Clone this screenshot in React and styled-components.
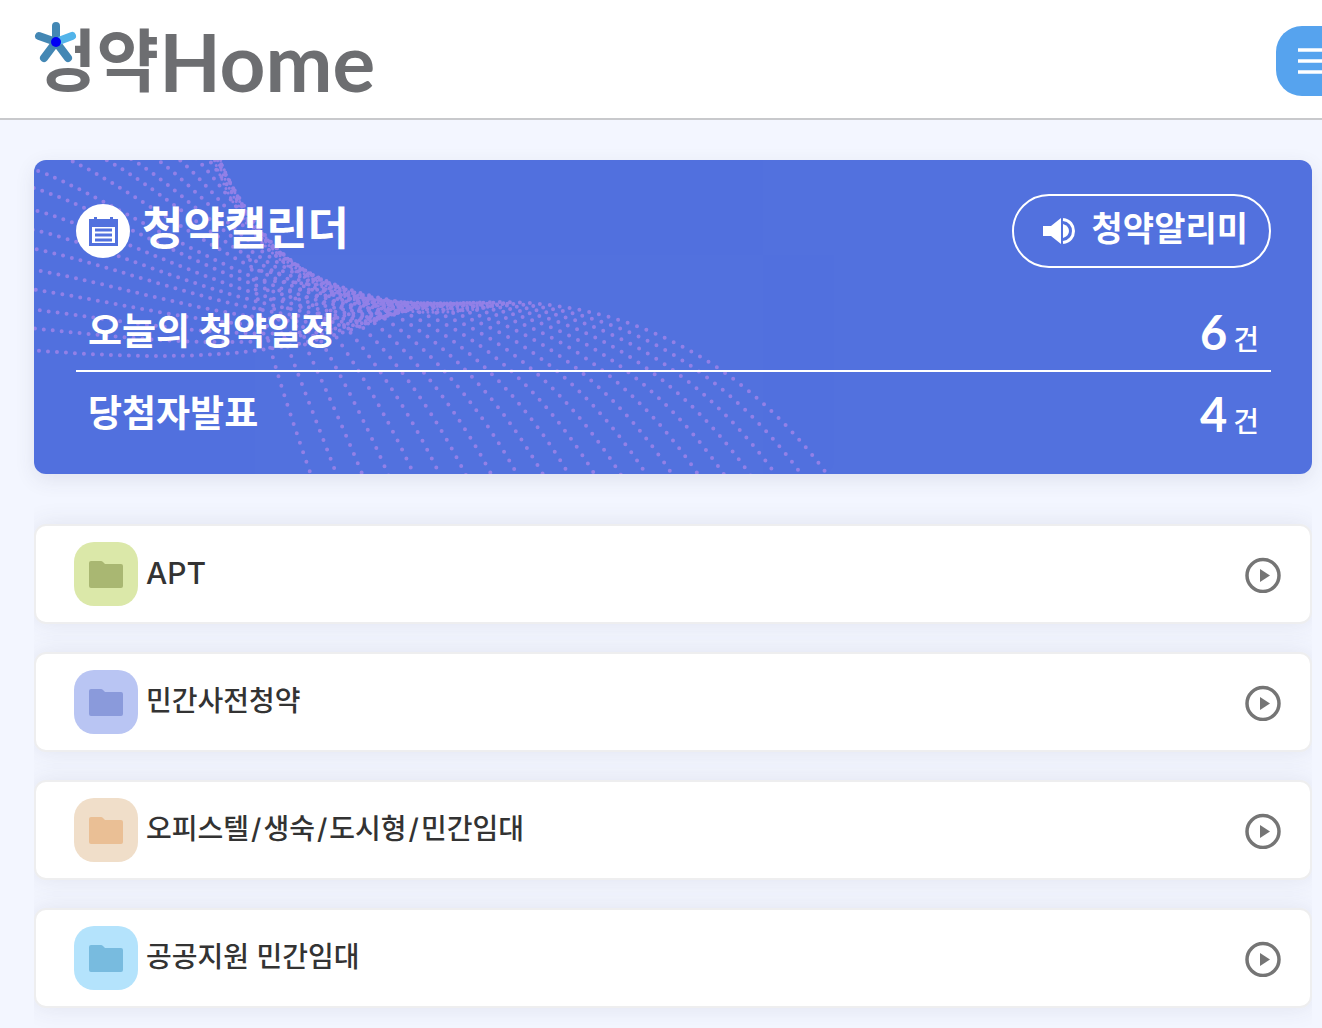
import React from "react";
import styled, { createGlobalStyle } from "styled-components";

const GlobalStyle = createGlobalStyle`
  *, *::before, *::after { box-sizing: border-box; }
  body {
    margin: 0;
    background: #f3f6ff;
    color: #333;
    font-family: Inter, "Noto Sans CJK KR", sans-serif;
    overflow-x: hidden;
  }
  a { color: inherit; text-decoration: none; }
  h1, h2, ul { margin: 0; padding: 0; }
  ul { list-style: none; }
`;

const Header = styled.header`
  display: flex;
  align-items: center;
  justify-content: space-between;
  height: 120px;
  padding: 4px 0 0 34px;
  background: #fff;
  border-bottom: 2px solid #c8c9cc;
  overflow: hidden;
`;

const Logo = styled.a`
  position: relative;
  display: flex;
  align-items: flex-start;
  color: #6d6e71;
  white-space: nowrap;
`;

const LogoKorean = styled.span`
  font: 700 68px/72px "Noto Sans CJK KR", sans-serif;
`;

const LogoLatin = styled.span`
  font: 700 80px/80px Lato, sans-serif;
`;

const LogoStar = styled.svg`
  position: absolute;
  left: 0;
  top: 0;
  width: 44px;
  height: 48px;
`;

const MenuButton = styled.button`
  display: flex;
  flex: none;
  align-items: center;
  justify-content: center;
  width: 70px;
  height: 70px;
  margin-right: -24px;
  padding: 0;
  border: 0;
  border-radius: 26px;
  background: #56a3ee;
`;

const Main = styled.main`
  padding: 40px 10px 0 34px;
`;

const Hero = styled.section`
  position: relative;
  padding: 34px 41px 22px 42px;
  border-radius: 12px;
  background: #5271de;
  box-shadow: 0 6px 20px rgba(60, 60, 90, 0.1);
  color: #fff;
`;

const Wave = styled.svg`
  position: absolute;
  left: 0;
  top: 0;
  width: 800px;
  height: 100%;
  border-radius: 12px;
`;

const HeroHead = styled.div`
  position: relative;
  display: flex;
  align-items: center;
  justify-content: space-between;
  margin-bottom: 22px;
`;

const HeroTitle = styled.h1`
  display: flex;
  align-items: center;
  gap: 12px;
  font-size: 45px;
  font-weight: 700;
  line-height: 54px;
`;

const TitleText = styled.span`
  padding-bottom: 4px;
`;

const AlertButton = styled.button`
  display: flex;
  align-items: center;
  gap: 16px;
  height: 74px;
  padding: 0 21px 0 28px;
  border: 2px solid #fff;
  border-radius: 37px;
  background: transparent;
  color: #fff;
  font: 700 34px/40px Inter, "Noto Sans CJK KR", sans-serif;
`;

const AlertText = styled.span`
  padding-bottom: 4px;
`;

const Schedule = styled.ul`
  position: relative;
`;

const ScheduleItem = styled.li`
  & + & { border-top: 2px solid #fff; }
`;

const ScheduleLink = styled.a`
  display: flex;
  align-items: center;
  justify-content: space-between;
  height: 80px;
  padding: 4px 12px 0;
  font-size: 37px;
  font-weight: 700;
  line-height: 44px;
`;

const Count = styled.span`
  display: flex;
  align-items: baseline;
  gap: 6px;
  padding-top: 8px;
  font-size: 28px;
  font-weight: 500;
`;

const CountNumber = styled.strong`
  font-family: Lato, sans-serif;
  font-size: 47px;
  font-weight: 700;
`;

const Menu = styled.nav`
  padding: 50px 0 28px;
  overflow: hidden;
`;

const MenuList = styled.ul`
  display: grid;
  gap: 28px;
`;

const MenuLink = styled.a`
  display: flex;
  align-items: center;
  gap: 8px;
  height: 100px;
  padding: 0 28px 0 38px;
  border: 2px solid #eeeeef;
  border-radius: 12px;
  background: #fff;
  box-shadow: 0 0 24px rgba(60, 60, 90, 0.1);
`;

const FolderTile = styled.span`
  display: flex;
  align-items: center;
  justify-content: center;
  width: 64px;
  height: 64px;
  border-radius: 20px;
  background: ${(p) => p.$tile};
  color: ${(p) => p.$ink};
`;

const MenuText = styled.span`
  flex: 1;
  padding-bottom: 2px;
  font-size: ${(p) => (p.$latin ? 30 : 28)}px;
  font-weight: 500;
  line-height: 40px;
`;

const Slash = styled.span`
  padding: 0 2px;
`;

const leftStarts = [
  [30, 350], [30, 328], [30, 309], [30, 289], [30, 269], [30, 248], [30, 229],
  [30, 209], [30, 187], [30, 168], [60, 156], [98, 156], [126, 156], [152, 156],
  [175, 156], [194, 156], [206, 156], [214, 156], [217, 156],
];

const mix = (a, b, u) => a + (b - a) * u;

const leftRows = leftStarts.map(([x, y], i) => {
  const u = i / (leftStarts.length - 1);
  const reach = mix(130, 40, u);
  const slope = 0.08 + 0.4 * u + 1.5 * u ** 5;
  return `M${x} ${y}C${x + reach} ${y + reach * slope} ${mix(290, 275, u)} ${mix(362, 285, u)} ${mix(390, 430, u)} ${mix(314, 307, u)}`;
});

const rightRows = Array.from({ length: 21 }, (_, i) => {
  const u = i / 20;
  const x = mix(250, 440, u);
  const y = 306 - 46 * (1 - u) ** 2;
  return `M${x} ${y}C${mix(262, 600, u)} ${mix(330, 285, u)} ${mix(285, 735, u)} ${mix(400, 348, u)} ${mix(312, 830, u)} 478`;
});

const ridge = [0, 3, 6].map(
  (d) => `M${219 - d} 156C${242 - d} ${220 + d} 290 ${296 + d} 420 ${306 + d}Q460 ${308 + d} 510 303`
);

function DottedWave() {
  return (
    <Wave viewBox="34 160 800 314" preserveAspectRatio="xMinYMin slice" aria-hidden="true">
      <g fill="none" stroke="#a886ea" strokeLinecap="round" strokeWidth="4" opacity="0.75">
        {leftRows.map((d, i) => (
          <path key={d} d={d} strokeDasharray="0 9" strokeDashoffset={(i * 4) % 9} />
        ))}
        {rightRows.map((d, i) => (
          <path key={d} d={d} strokeDasharray="0 10" strokeDashoffset={(i * 3) % 10} />
        ))}
        {ridge.map((d) => (
          <path key={d} d={d} strokeDasharray="0 5" strokeWidth="3" />
        ))}
      </g>
    </Wave>
  );
}

function StarIcon() {
  return (
    <LogoStar viewBox="0 0 44 48" aria-hidden="true">
      <path d="M0 0H43V22H41V34H43V44L38 46H0Z" fill="#fff" />
      <g stroke="#4387b4" strokeWidth="8" strokeLinecap="round">
        <path d="M22 21V5M22 21L5 15M22 21L10 37M22 21L34 37" />
        <path d="M22 21L38 15" stroke="#52b4ea" />
      </g>
      <circle cx="22" cy="21" r="5" fill="#0000f5" />
    </LogoStar>
  );
}

function CalendarIcon() {
  return (
    <svg width="54" height="54" viewBox="0 0 54 54" aria-hidden="true">
      <circle cx="27" cy="27" r="27" fill="#fff" />
      <path d="M13 15H18V13H21V15H34V13H37V15H42V42H13Z" fill="#5271de" />
      <path d="M16 23H39V39H16Z" fill="#fff" />
      <path d="M19 26H36M19 31H36M19 36H36" stroke="#5271de" strokeWidth="3" />
    </svg>
  );
}

function SpeakerIcon() {
  return (
    <svg width="34" height="28" viewBox="0 0 34 28" aria-hidden="true">
      <path d="M1 9H9L19 1V27L9 19H1Z" fill="#fff" />
      <path d="M21 7Q27 9 27 14Q27 19 21 21Z" fill="#fff" />
      <path d="M21 2.500C35 4 35 24 21 25.500" fill="none" stroke="#fff" strokeWidth="3" />
    </svg>
  );
}

function FolderIcon() {
  return (
    <svg width="34" height="28" viewBox="0 0 34 28" aria-hidden="true">
      <path d="M2 1H12Q13 1 14 2L16 4H32Q34 4 34 6V26Q34 28 32 28H2Q0 28 0 26V3Q0 1 2 1Z" fill="currentColor" />
    </svg>
  );
}

function PlayIcon() {
  return (
    <svg width="38" height="38" viewBox="0 0 38 38" aria-hidden="true">
      <circle cx="19" cy="20.500" r="16" fill="none" stroke="#757575" strokeWidth="3.500" />
      <path d="M16 14L26 20.500L16 27Z" fill="#757575" />
    </svg>
  );
}

const schedule = [
  { label: "오늘의 청약일정", count: 6 },
  { label: "당첨자발표", count: 4 },
];

const categories = [
  { label: "APT", tile: "#dbe8a9", ink: "#a9b772", latin: true },
  { label: "민간사전청약", tile: "#b9c5f3", ink: "#8a9adb" },
  { label: "오피스텔/생숙/도시형/민간임대", tile: "#f0dec9", ink: "#eabf95" },
  { label: "공공지원 민간임대", tile: "#b4e3fc", ink: "#78bbdf" },
];

function Label({ text }) {
  return text.split("/").map((part, i) => (
    <React.Fragment key={part}>
      {i > 0 && <Slash>/</Slash>}
      {part}
    </React.Fragment>
  ));
}

export default function App() {
  return (
    <>
      <GlobalStyle />
      <Header>
        <Logo href="#home">
          <LogoKorean>청약</LogoKorean>
          <LogoLatin>Home</LogoLatin>
          <StarIcon />
        </Logo>
        <MenuButton type="button" aria-label="전체메뉴">
          <svg width="28" height="28" viewBox="0 0 28 28" aria-hidden="true">
            <path d="M1 3H27M1 14H27M1 25H27" stroke="#fff" strokeWidth="3.500" />
          </svg>
        </MenuButton>
      </Header>
      <Main>
        <Hero>
          <DottedWave />
          <HeroHead>
            <HeroTitle>
              <CalendarIcon />
              <TitleText>청약캘린더</TitleText>
            </HeroTitle>
            <AlertButton type="button">
              <SpeakerIcon />
              <AlertText>청약알리미</AlertText>
            </AlertButton>
          </HeroHead>
          <Schedule>
            {schedule.map((item) => (
              <ScheduleItem key={item.label}>
                <ScheduleLink href="#calendar">
                  <span>{item.label}</span>
                  <Count>
                    <CountNumber>{item.count}</CountNumber>
                    <span>건</span>
                  </Count>
                </ScheduleLink>
              </ScheduleItem>
            ))}
          </Schedule>
        </Hero>
        <Menu>
          <MenuList>
            {categories.map((item) => (
              <li key={item.label}>
                <MenuLink href="#category">
                  <FolderTile $tile={item.tile} $ink={item.ink}>
                    <FolderIcon />
                  </FolderTile>
                  <MenuText $latin={item.latin}>
                    <Label text={item.label} />
                  </MenuText>
                  <PlayIcon />
                </MenuLink>
              </li>
            ))}
          </MenuList>
        </Menu>
      </Main>
    </>
  );
}
